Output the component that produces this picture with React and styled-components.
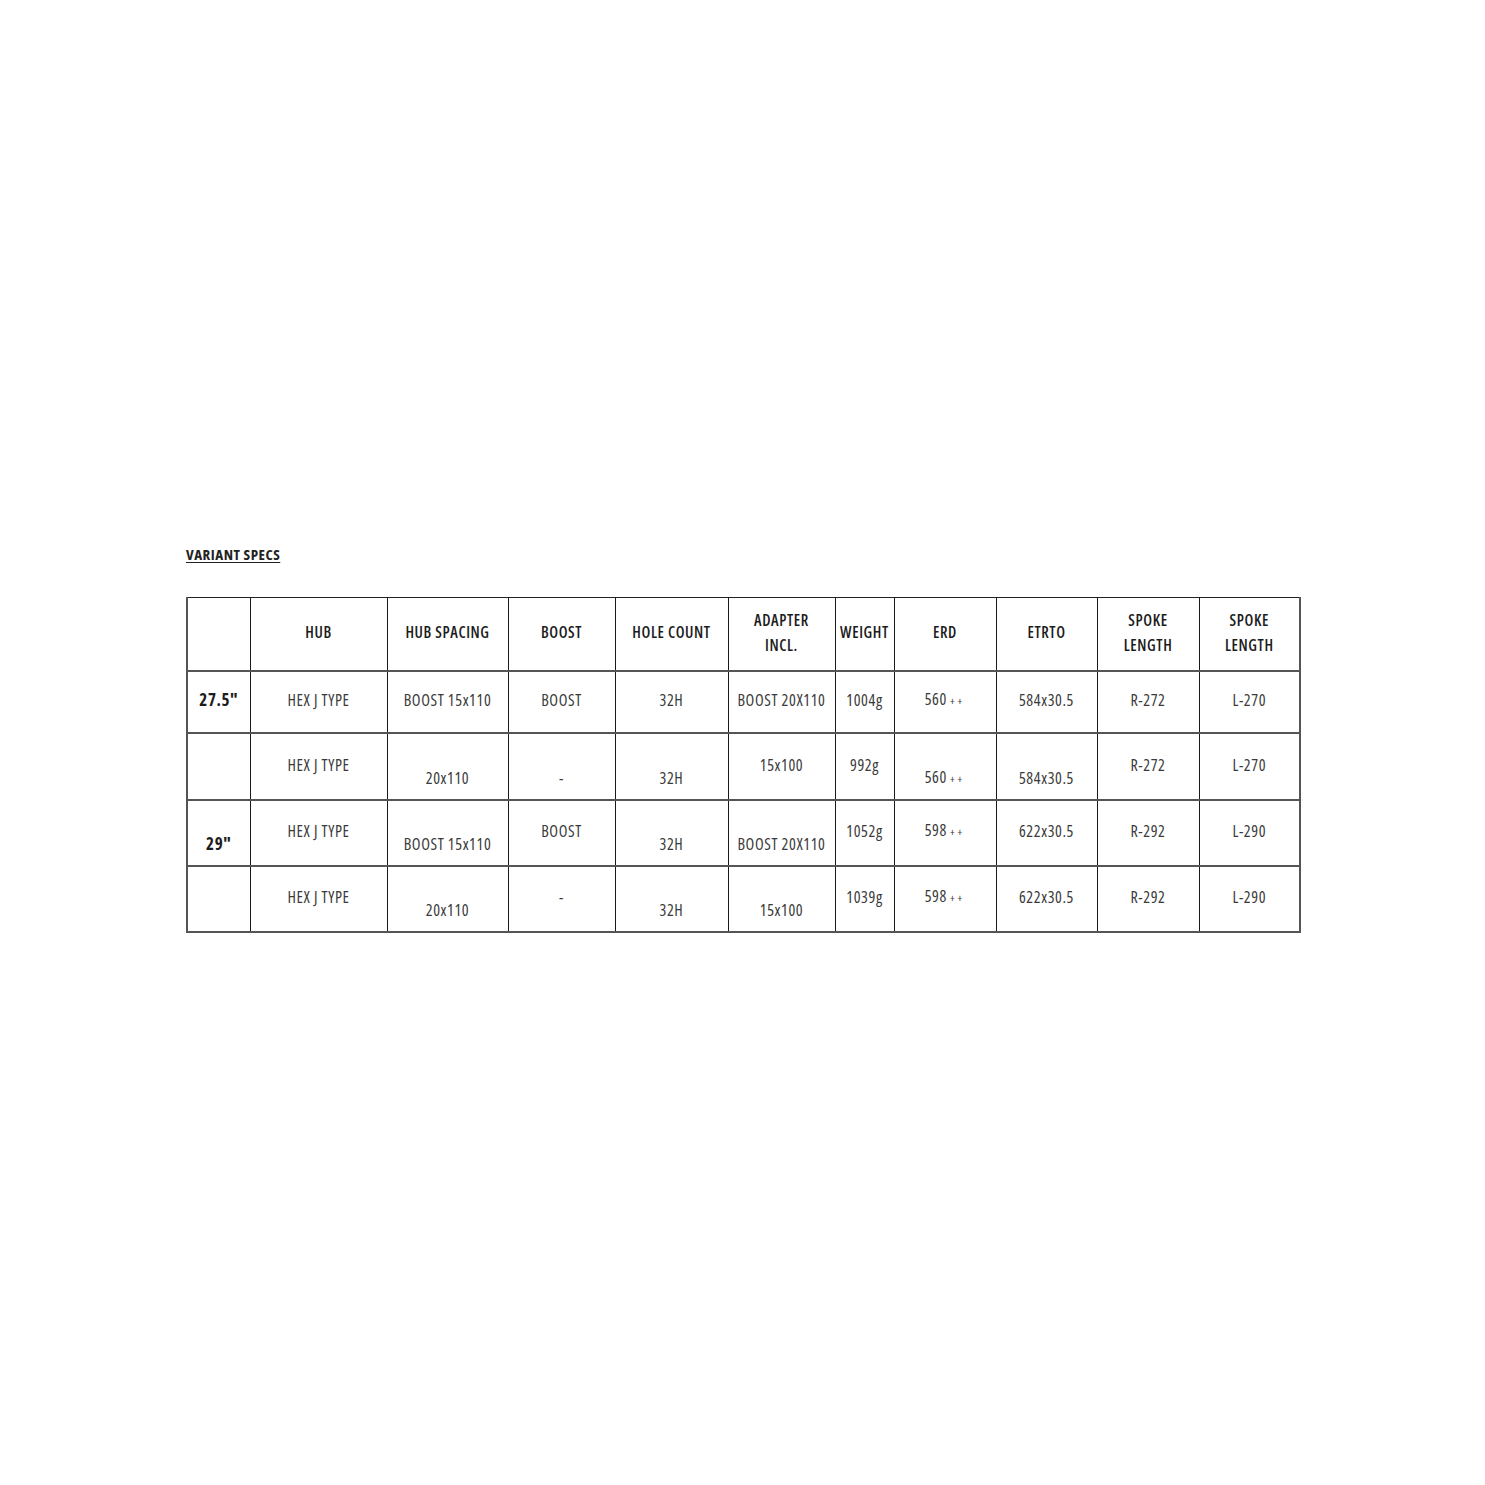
import React from "react";
import styled, { createGlobalStyle } from "styled-components";

const GlobalStyle = createGlobalStyle`
  body {
    margin: 0;
    background: #ffffff;
    font-family: "Open Sans", "Roboto", sans-serif;
    font-stretch: 75%;
    color: #333;
  }
`;

const Wrapper = styled.div`
  width: 1113px;
  margin: 546px auto 0;
`;

const Heading = styled.h4`
  margin: 0 0 34px;
  font-size: 15px;
  font-weight: 700;
  letter-spacing: 0.5px;
  color: #222;
  text-decoration: underline;
  text-underline-offset: 2px;
  line-height: 17px;
`;

const SpecTable = styled.table`
  width: 1113px;
  table-layout: fixed;
  border-collapse: collapse;
  border-left: 2px solid #555;
  border-right: 2px solid #555;
  border-top: 1px solid #222;
  border-bottom: 2px solid #555;
`;

const Row = styled.tr`
  height: ${(p) => p.$h}px;
`;

const Head = styled.th`
  border-left: 1px solid #1a1a1a;
  border-right: 1px solid #1a1a1a;
  border-bottom: 2px solid #555;
  padding: 0 1px 2px;
  font-size: 15.5px;
  font-weight: 600;
  letter-spacing: 0.6px;
  line-height: 25px;
  color: #1c1c1c;
  text-align: center;
  vertical-align: middle;
  white-space: nowrap;
`;

const Cell = styled.td`
  border-left: 1px solid #1a1a1a;
  border-right: 1px solid #1a1a1a;
  border-bottom: 2px solid #555;
  padding: 4px 2px 7px;
  font-size: ${(p) => (p.$bold ? 17 : 16)}px;
  font-weight: ${(p) => (p.$bold ? 700 : 400)};
  letter-spacing: 0.6px;
  line-height: 26px;
  color: ${(p) => (p.$bold ? "#1c1c1c" : "#3a3a3a")};
  text-align: center;
  vertical-align: middle;
  white-space: nowrap;
`;

const Value = styled.span`
  display: block;
  padding-top: ${(p) => (p.$low ? 26 : 0)}px;
`;

const Plus = styled.span`
  font-size: 11px;
  letter-spacing: 3px;
  margin-left: 3px;
`;

const widths = [63, 137, 121, 107, 113, 107, 59, 102, 101, 102, 101];

const headers = [
  "",
  "HUB",
  "HUB SPACING",
  "BOOST",
  "HOLE COUNT",
  ["ADAPTER", "INCL."],
  "WEIGHT",
  "ERD",
  "ETRTO",
  ["SPOKE", "LENGTH"],
  ["SPOKE", "LENGTH"],
];

// "_" prefix means the value sits one half line lower (blank line before it)
const rows = [
  {
    h: 62,
    cells: ["27.5\"", "HEX J TYPE", "BOOST 15x110", "BOOST", "32H", "BOOST 20X110", "1004g", "560++", "584x30.5", "R-272", "L-270"],
  },
  {
    h: 67,
    cells: ["", "HEX J TYPE", "_20x110", "_-", "_32H", "15x100", "992g", "_560++", "_584x30.5", "R-272", "L-270"],
  },
  {
    h: 66,
    cells: ["_29\"", "HEX J TYPE", "_BOOST 15x110", "BOOST", "_32H", "_BOOST 20X110", "1052g", "598++", "622x30.5", "R-292", "L-290"],
  },
  {
    h: 66,
    cells: ["", "HEX J TYPE", "_20x110", "-", "_32H", "_15x100", "1039g", "598++", "622x30.5", "R-292", "L-290"],
  },
];

const renderText = (text) => {
  if (text.endsWith("++")) {
    return (
      <>
        {text.slice(0, -2)}
        <Plus>++</Plus>
      </>
    );
  }
  return text;
};

export default function App() {
  return (
    <>
      <GlobalStyle />
      <Wrapper>
        <Heading>VARIANT SPECS</Heading>
        <SpecTable>
          <colgroup>
            {widths.map((w, i) => (
              <col key={i} style={{ width: w }} />
            ))}
          </colgroup>
          <thead>
            <Row $h={73}>
              {headers.map((h, i) => (
                <Head key={i}>
                  {Array.isArray(h) ? (
                    <>
                      {h[0]}
                      <br />
                      {h[1]}
                    </>
                  ) : (
                    h
                  )}
                </Head>
              ))}
            </Row>
          </thead>
          <tbody>
            {rows.map((row, r) => (
              <Row key={r} $h={row.h}>
                {row.cells.map((c, i) => {
                  const low = c.startsWith("_");
                  const text = low ? c.slice(1) : c;
                  return (
                    <Cell key={i} $bold={i === 0}>
                      <Value $low={low}>{renderText(text)}</Value>
                    </Cell>
                  );
                })}
              </Row>
            ))}
          </tbody>
        </SpecTable>
      </Wrapper>
    </>
  );
}
